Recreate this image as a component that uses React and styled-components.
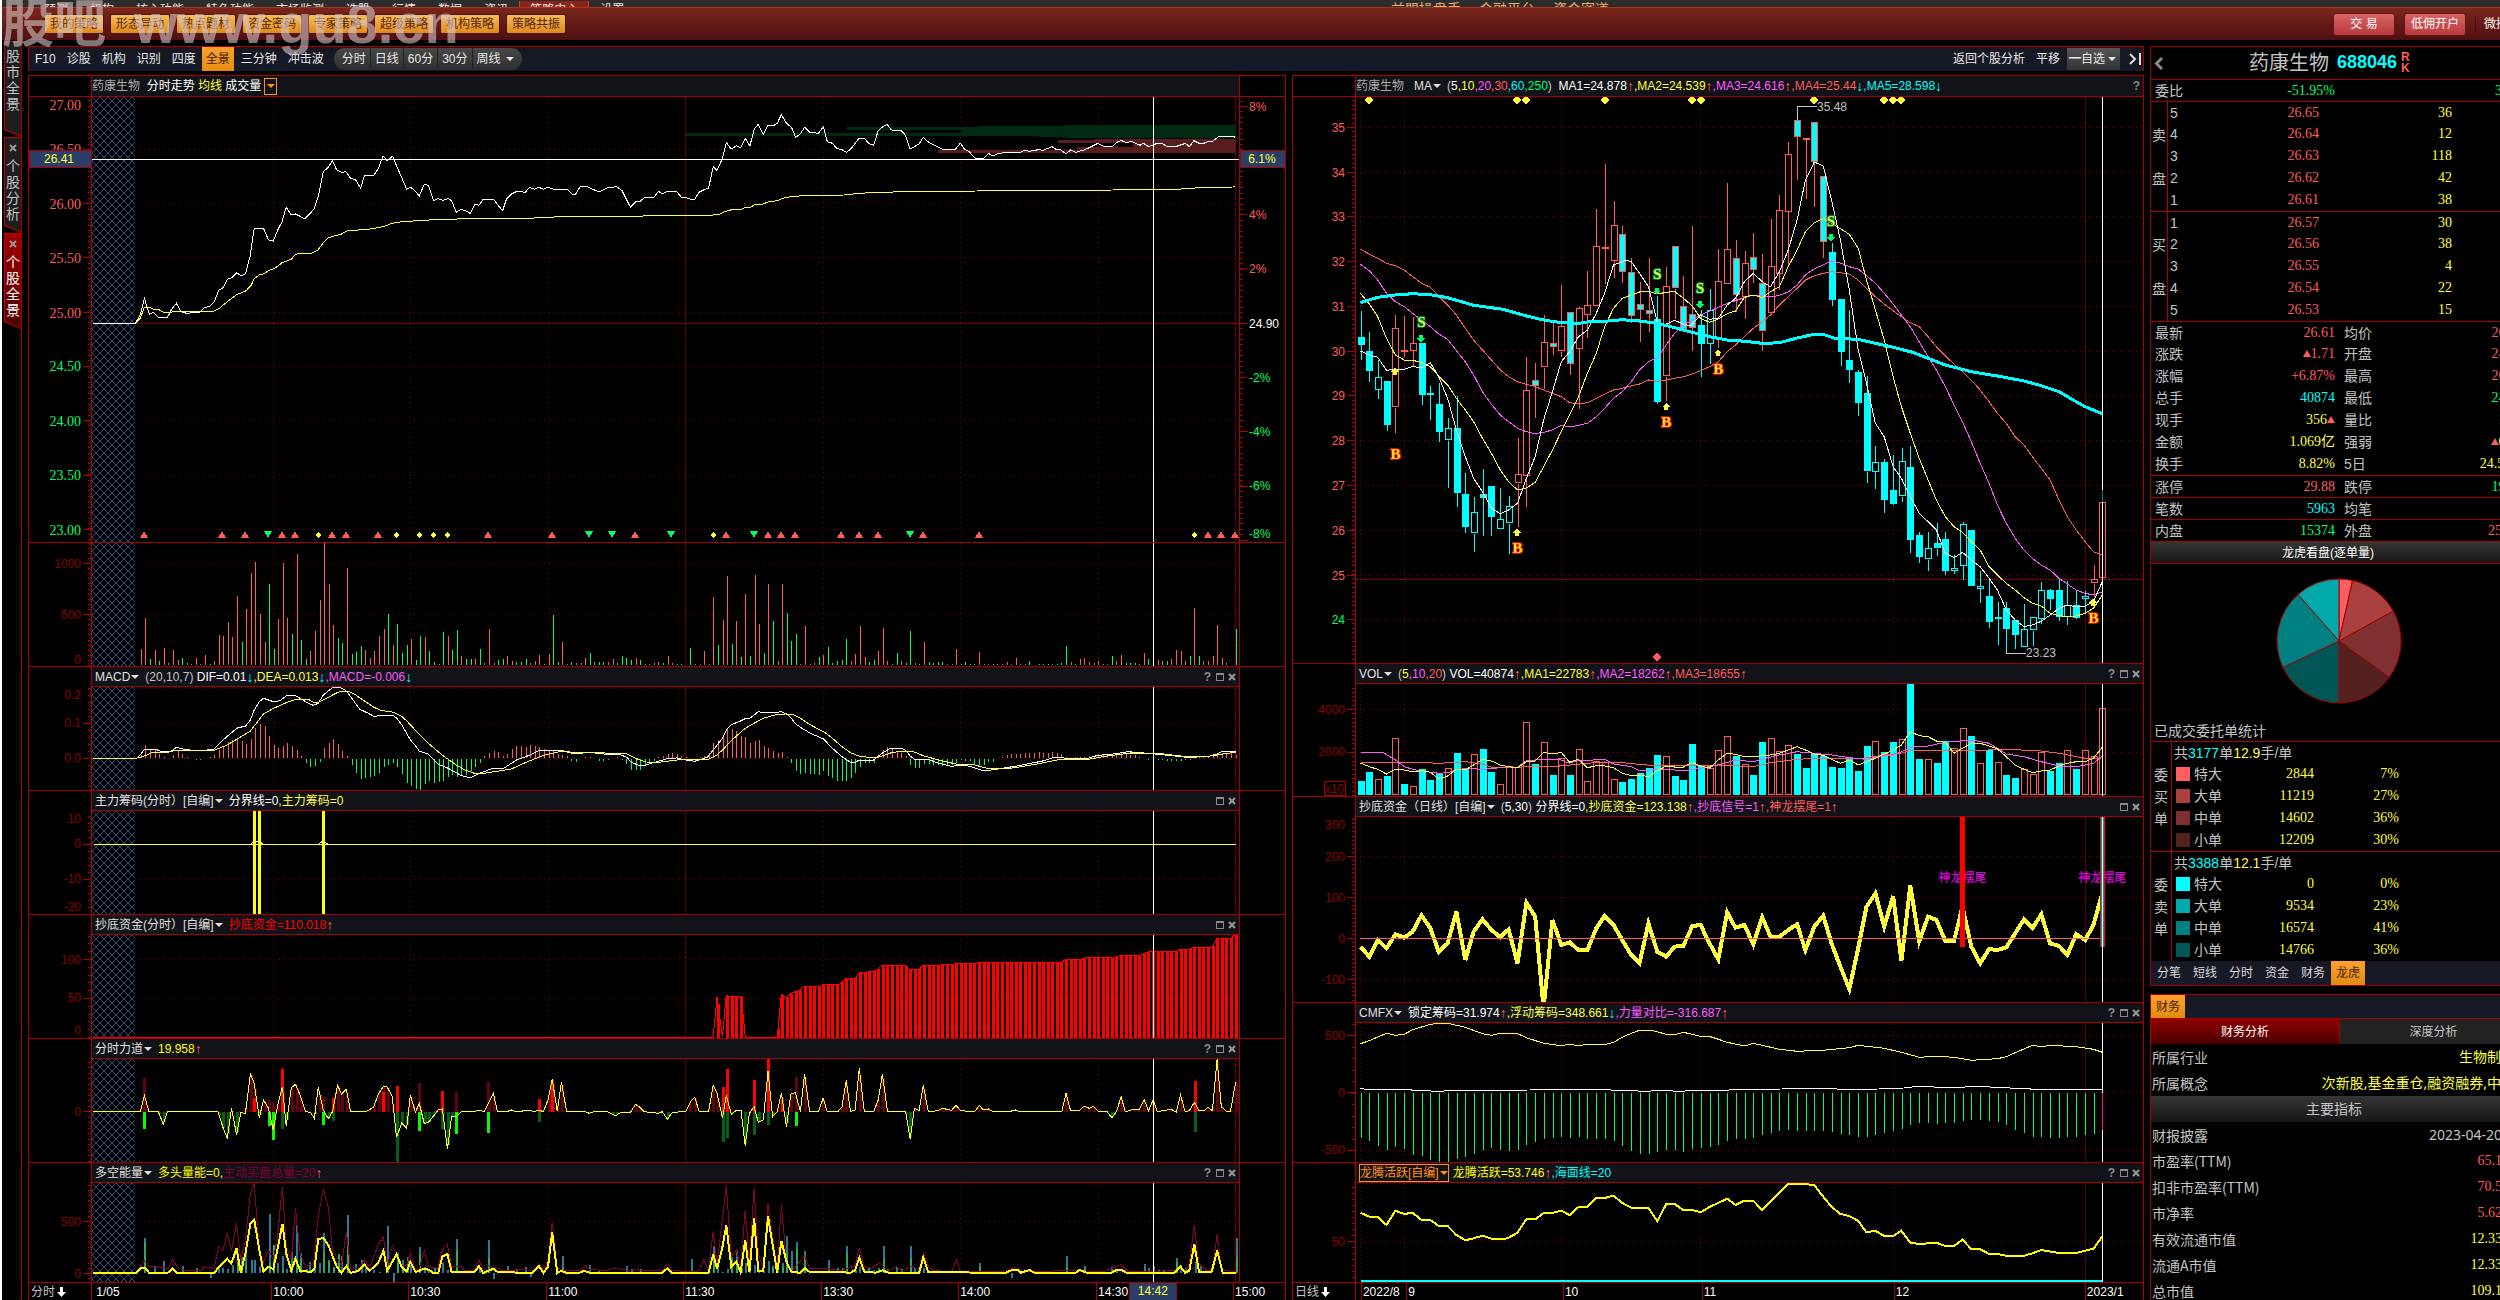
import React from 'react'
import styled, { createGlobalStyle, css } from 'styled-components';

const RED = '#a80000';
const UP = '#ff5c5c';
const DOWN = '#00ff66';
const YEL = '#ffff40';
const CYAN = '#00ffff';
const PINK = '#ff5cff';
const GREY = '#c4c4c4';
const WHITE = '#ffffff';

const GlobalStyle = createGlobalStyle`
    * { box-sizing: border-box; }
    body {
        margin: 0;
        background: #000;
        color: ${GREY};
        font: 12px/16px "Liberation Sans", "Noto Sans CJK SC", sans-serif;
    }
    button {
        font: inherit;
        color: inherit;
        background: none;
        border: 0;
        padding: 0;
        white-space: nowrap;
        cursor: pointer;
    }
    svg { display: block; }
`;

/* ---------- data ---------- */

// session feeds come in two halves, x in feed units from the start of each half
const KX = 660 / 1568;
const session = (a, b, y0) => {
    const out = [];
    for (let i = 0; i < a.length; i += 2) out.push([a[i] * KX, y0 + a[i + 1] / 3]);
    for (let i = 0; i < b.length; i += 2) out.push([640 + b[i] * KX, y0 + b[i + 1] / 3]);
    return out;
};
const KD = 870 / 1568;
const dx = (u) => 1280 + u * KD;
const daily = (a, y0) => {
    const out = [];
    for (let i = 0; i < a.length; i += 2) out.push([dx(a[i]), y0 + a[i + 1] / 3]);
    return out;
};
const minuteX = (m) => Math.round(136.3 + 4.58 * m);
const dayX = (i) => Math.round(1360.5 + 8.728 * i);
const valueAt = (pts, x) => {
    for (let i = 1; i < pts.length; i++) {
        if (x <= pts[i][0]) {
            const [x1, y1] = pts[i - 1];
            const [x2, y2] = pts[i];
            return x2 === x1 ? y2 : y1 + (y2 - y1) * (x - x1) / (x2 - x1);
        }
    }
    return pts[pts.length - 1][1];
};

const price = session(
    [222,970,322,970,333,945,343,895,350,925,355,943,365,937,376,952,398,952,409,925,419,910,430,935,443,940,474,937,486,922,498,920,509,905,520,870,530,863,540,838,551,833,562,818,572,827,583,822,594,770,604,685,626,685,638,720,649,723,660,690,670,665,680,622,691,643,702,642,724,656,735,643,747,625,757,585,768,515,780,502,790,482,800,510,811,517,822,515,833,535,845,540,857,565,866,525,888,525,898,508,910,468,920,482,933,468,943,500,955,535,966,567,975,562,986,572,996,588,1008,553,1018,556,1030,602,1040,596,1052,601,1065,596,1073,602,1084,637,1095,628,1105,632,1117,640,1128,613,1138,616,1148,598,1173,598,1183,615,1194,632,1203,598,1215,582,1228,574,1248,577,1258,562,1270,568,1280,562,1291,568,1302,562,1320,570,1347,568,1360,583,1368,582,1379,559,1393,559,1423,576,1443,564,1465,560,1478,572,1487,595,1498,622,1510,605,1520,606],
    [0,604,12,592,33,592,44,574,53,582,65,574,87,574,98,592,108,592,120,598,130,598,141,576,151,570,163,564,174,500,183,511,196,475,205,428,217,447,229,437,239,443,250,415,261,438,271,388,281,373,293,403,304,376,316,378,326,370,336,344,348,370,360,382,370,412,381,401,391,382,403,397,424,400,436,380,445,425,457,430,467,445,480,449,490,457,500,448,521,414,533,415,543,430,555,436,566,392,575,382,587,373,597,390,620,391,630,405,642,447,663,432,673,412,685,426,707,440,718,448,749,448,761,430,771,447,783,456,795,474,816,475,828,460,838,468,849,461,870,457,903,457,913,451,925,454,946,449,958,451,979,440,990,449,1000,450,1012,462,1023,450,1035,457,1055,450,1067,443,1088,430,1100,438,1121,441,1131,428,1143,421,1155,428,1167,424,1188,436,1196,430,1208,440,1229,430,1240,430,1251,439,1275,439,1296,430,1305,440,1316,422,1328,430,1340,430,1350,424,1360,424,1377,408,1411,408,1414,413], 0);
const average = session(
    [324,967,333,955,343,922,355,922,365,928,376,928,388,937,405,937,418,934,508,934,520,926,540,905,562,884,585,872,597,855,604,836,616,825,626,822,638,812,650,806,660,799,670,788,692,778,702,763,712,760,740,760,755,751,768,728,780,714,790,709,810,703,828,690,850,690,855,687,880,687,910,680,932,670,955,665,1045,658,1130,656,1255,655,1330,650,1515,649],
    [0,649,25,646,168,646,190,642,203,634,215,630,240,628,250,623,262,622,271,615,293,612,305,605,326,602,346,592,385,587,485,585,520,580,570,577,635,575,800,573,1125,570,1275,568,1330,563,1409,561,1414,559], 0);
const volume = [48,141,-18,45,-12,51,6,45,15,-21,-6,3,21,3,30,-3,12,90,87,129,84,207,-69,168,276,309,153,69,-243,-48,138,306,141,-93,333,-75,-18,42,102,195,366,243,120,-81,-66,291,-33,-39,-57,45,21,42,87,108,-153,60,-123,-36,-60,78,-15,-87,84,-42,-9,3,-99,87,-45,-105,27,-18,-18,18,-48,6,108,6,-15,-18,27,12,-9,-9,-18,6,12,30,-3,33,-150,-9,69,3,-9,6,6,21,-36,9,-9,-9,9,18,-6,-27,-21,-15,21,-15,3,3,6,9,-6,27,6,-3,-3,0,-51,3,3,42,3,204,-60,135,267,-63,132,-24,213,-27,270,123,-36,243,-132,12,243,-156,-72,-93,3,117,3,6,-24,30,-54,-6,-12,-15,-78,12,33,117,24,-9,-15,42,111,12,-3,-36,12,-6,-102,6,-3,69,-9,-6,-9,-9,3,3,48,-3,-9,-3,-3,39,3,3,-3,3,3,9,3,21,-3,3,-12,0,-3,-3,-3,3,-3,-6,-57,9,-3,18,21,9,6,12,-3,3,-27,12,30,-6,-6,-6,-3,36,-18,-12,15,12,-12,18,45,42,12,-27,171,-27,12,12,27,120,21,6,0,-108];
const macdBars = [8,39,27,24,12,3,0,9,21,12,3,0,-4,-4,0,3,9,24,36,48,54,57,51,42,57,90,102,96,66,39,30,36,45,36,24,6,-12,-24,-20,-8,30,45,57,42,21,6,-18,-42,-60,-57,-54,-51,-42,-24,-18,-12,-24,-45,-72,-80,-90,-93,-75,-65,-72,-69,-66,-54,-48,-54,-51,-48,-36,-24,-12,6,15,21,18,6,12,27,36,36,33,39,36,33,27,24,21,12,9,6,-6,-9,0,3,3,0,-6,-6,-3,0,3,-3,-15,-33,-33,-33,-21,-15,-6,3,6,12,15,12,6,3,-3,-6,3,6,15,45,54,70,90,87,81,66,63,45,51,54,36,30,21,15,18,3,-12,-36,-45,-42,-45,-45,-48,-36,-51,-57,-66,-66,-66,-57,-42,-24,-12,-12,-12,9,24,33,27,21,15,6,-18,-27,-27,-15,-15,-18,-18,-21,-21,-18,-12,-3,-6,-6,-15,-18,-18,-9,-9,0,3,9,12,12,12,15,15,15,18,15,15,18,15,12,3,0,3,3,3,6,6,12,9,9,9,15,18,12,9,9,3,0,-3,-3,-3,-3,-6,-6,-6,-6,-3,-3,3,6,6,3,6,12,15,15,15,9];
const dif = session(
    [222,715,324,715,333,705,343,688,370,688,385,695,405,695,419,682,437,688,470,693,508,688,518,676,530,660,550,638,565,623,583,619,595,600,604,570,616,545,626,535,638,540,650,545,665,542,682,526,700,526,713,535,730,548,744,556,756,550,768,525,790,503,808,503,822,512,833,530,855,568,875,580,888,589,905,587,933,586,943,595,955,615,966,640,975,660,986,675,996,693,1018,703,1040,732,1065,745,1095,766,1117,774,1140,760,1170,745,1194,747,1227,720,1250,710,1280,692,1333,691,1365,702,1400,697,1440,703,1470,703,1490,712,1498,725,1515,735],
    [0,737,14,735,45,723,65,716,87,714,108,720,130,724,160,712,174,690,196,655,205,630,217,614,239,603,250,596,262,594,281,575,290,577,325,577,336,575,350,583,360,595,370,612,385,625,405,640,436,657,457,685,480,710,500,727,512,727,520,720,555,720,575,700,595,685,622,685,632,692,642,708,655,720,685,718,705,728,740,739,770,735,795,743,816,753,850,747,900,737,960,722,985,712,1000,713,1022,716,1060,716,1088,706,1120,703,1160,695,1190,698,1240,704,1300,712,1350,710,1370,702,1385,694,1415,694], 520);
const dea = session(
    [222,715,324,715,345,707,360,698,400,697,419,690,510,690,540,675,570,652,595,633,626,582,650,565,680,548,700,539,735,540,745,547,756,547,768,540,790,525,808,514,828,514,845,525,866,543,888,562,905,571,935,577,955,590,966,602,990,635,1018,670,1050,705,1084,735,1105,750,1127,760,1150,760,1215,747,1250,727,1291,706,1330,695,1375,697,1420,698,1490,702,1510,715],
    [0,720,15,726,45,727,87,720,108,718,145,719,165,717,183,705,196,690,217,662,250,625,271,610,293,595,320,585,345,582,362,583,381,595,403,613,424,628,440,638,457,655,480,680,500,698,520,708,555,714,575,708,600,697,632,693,655,697,672,707,710,720,750,732,795,735,825,745,880,745,940,733,990,720,1065,718,1110,708,1165,699,1230,700,1290,709,1350,709,1385,702,1415,697], 520);
const bottomFund = session([222,411],
    [0,411,174,411,183,292,196,411,205,286,215,290,241,290,250,411,326,411,336,283,348,292,360,280,369,275,380,272,388,260,430,258,436,253,475,253,490,235,512,235,521,217,558,215,575,196,631,196,640,208,663,208,673,196,710,196,718,193,745,193,751,190,800,190,806,187,1002,187,1012,178,1050,178,1060,172,1115,172,1122,175,1140,167,1188,166,1210,154,1275,154,1285,148,1305,148,1315,142,1360,142,1370,116,1405,114,1415,103], 900);
const force = session(
    [222,635,333,635,343,587,354,635,376,635,388,673,398,635,518,635,529,680,540,716,550,625,562,704,572,638,583,640,595,522,604,550,616,653,626,600,638,625,649,690,659,620,671,560,680,677,692,563,702,553,713,585,726,635,738,637,747,656,756,562,768,630,780,656,790,635,802,556,811,582,823,568,833,635,870,635,887,622,900,580,911,559,920,561,932,590,942,712,954,670,966,685,975,585,987,637,996,610,1008,671,1018,667,1030,648,1041,630,1051,627,1063,748,1073,650,1084,650,1096,635,1127,635,1138,630,1150,635,1160,610,1172,580,1182,635,1203,635,1215,630,1225,635,1258,631,1268,635,1280,630,1291,635,1302,600,1312,537,1324,634,1334,546,1346,635,1390,635,1400,640,1411,635,1442,635,1463,647,1475,637,1498,637,1510,613],
    [0,622,10,635,43,640,53,635,65,658,76,638,98,635,108,635,120,605,130,592,141,635,163,635,174,556,183,580,196,653,205,586,217,643,229,631,240,631,250,737,260,640,271,620,281,667,293,660,304,514,315,650,326,635,336,580,348,681,358,583,369,577,381,635,391,522,403,635,424,635,435,595,445,635,470,635,480,620,490,541,500,635,511,630,521,505,533,635,555,635,566,600,576,522,588,635,631,635,642,716,652,625,663,632,673,556,685,635,707,632,718,625,740,631,751,616,762,632,795,635,806,616,816,630,828,627,837,634,880,634,892,630,903,635,1002,635,1012,580,1023,632,1044,632,1055,618,1067,625,1077,619,1090,635,1110,635,1121,653,1132,635,1143,590,1153,635,1172,628,1186,628,1198,600,1208,632,1219,600,1229,635,1262,628,1274,637,1284,585,1295,635,1305,632,1317,607,1328,632,1340,632,1350,622,1360,632,1371,478,1381,620,1393,634,1403,634,1415,547], 900);
const MAROON = '#620014';
const FOREST = '#045f18';
const forceBars = [
    [343,534,MAROON],[996,549,MAROON],[1084,576,MAROON],[1160,546,MAROON],[768,590,MAROON],[638,600,MAROON],[649,606,MAROON],[1890,531,MAROON],
    [604,594,'red'],[671,507,'red'],[790,595,'red'],[911,575,'red'],[942,558,'red'],[1051,573,'red'],[1280,597,'red'],[1312,540,'red'],
    [1717,561,'red'],[1726,507,'red'],[1792,540,'red'],[1825,475,'red'],[1857,600,'red'],[2838,543,'red'],
    [343,686,'lime'],[638,677,'lime'],[649,719,'lime'],[768,674,'lime'],[996,692,'lime'],[1084,701,'lime'],[1160,698,'lime'],[1890,677,'lime'],
    [671,686,FOREST],[790,662,FOREST],[942,785,FOREST],[1051,686,FOREST],[1280,665,FOREST],[1717,725,FOREST],[1726,713,FOREST],[1792,704,FOREST],[1825,674,FOREST],[2838,695,FOREST],
];
const bullEnergy = session(
    [222,1119,324,1119,336,1104,345,1104,355,1119,398,1119,410,1106,420,1119,509,1119,520,1100,540,1076,550,1090,562,1045,572,1119,583,1060,595,972,604,959,616,1050,626,1115,638,1100,649,1108,659,1050,671,971,680,1060,692,1112,702,1076,713,1112,738,1116,747,1106,756,1018,768,1013,780,1035,800,1100,811,1119,823,1098,833,1119,850,1113,866,1094,878,1112,898,1090,911,1052,920,1112,942,1063,954,1100,966,1116,975,1085,987,1116,1008,1106,1020,1110,1030,1119,1041,1119,1051,1070,1063,1062,1073,1116,1127,1116,1138,1098,1148,1119,1172,1106,1182,1116,1265,1119,1280,1097,1291,1119,1302,1100,1312,997,1324,1119,1334,1112,1346,1119,1375,1119,1388,1112,1400,1118,1515,1118],
    [0,1118,53,1118,65,1105,76,1118,163,1118,174,1062,183,1106,196,1040,205,976,217,1100,229,1085,239,1117,250,1020,260,1117,271,955,281,1112,293,1112,304,949,326,1118,336,1022,348,1085,360,1116,380,1118,391,1104,403,1116,440,1115,500,1118,511,1110,521,1073,533,1115,560,1118,576,1111,590,1118,663,1118,673,1072,685,1117,870,1118,885,1109,898,1109,905,1118,925,1110,937,1118,1035,1118,1044,1109,1060,1118,1120,1118,1132,1110,1145,1110,1155,1118,1270,1118,1284,1100,1295,1118,1305,1112,1317,1033,1328,1116,1358,1116,1371,1052,1384,1118,1415,1118], 900);
const activeBuy = session(
    [324,1115,343,1083,355,1100,388,1103,400,1105,410,1078,420,1100,435,1110,478,1112,486,1100,509,1105,519,1040,529,1052,540,1000,550,1052,562,970,572,1080,583,1020,595,880,604,850,616,1050,626,1085,638,1050,649,1078,659,1010,671,860,680,1040,692,1078,702,925,713,1060,725,1100,745,1090,756,950,768,868,780,920,790,1052,800,1070,811,1097,823,995,833,1105,855,1105,866,1078,878,1105,898,1035,911,1010,920,1100,932,1038,942,1060,954,1095,966,1095,975,1060,987,1110,996,1105,1008,1052,1018,1100,1040,1105,1051,1050,1063,1033,1073,1100,1096,1100,1105,1112,1127,1112,1138,1080,1148,1112,1160,1097,1200,1113,1240,1108,1270,1112,1280,1090,1291,1112,1302,1080,1312,967,1324,1105,1340,1112,1380,1112,1390,1097,1400,1108,1440,1112,1460,1104,1500,1113,1515,1106],
    [0,1113,45,1110,53,1115,65,1090,76,1112,130,1115,141,1112,151,1080,163,1112,174,993,183,1095,205,858,217,1070,229,1050,239,1105,250,930,260,1085,271,865,281,1060,293,1110,304,912,326,1105,336,912,348,1090,360,1115,391,1068,403,1105,440,1105,479,1112,511,1097,521,1043,533,1100,550,1105,570,1088,590,1113,609,1100,625,1115,642,1098,663,1110,673,1060,685,1100,700,1112,740,1115,752,1080,762,1115,860,1115,892,1103,910,1115,1012,1112,1100,1115,1143,1094,1160,1115,1274,1112,1295,1113,1305,1090,1317,976,1328,1090,1345,1112,1360,1112,1371,1003,1381,1110,1415,1115], 900);
// [x, sell top, buy top]
const energyBars = [[343,1015,1025],[365,1097],[388,1083],[432,1098],[465,1105],[498,1133],[518,1108],[528,1105],[540,1107],[550,1095],[562,1060,1085],[572,1070,1100],[583,1060,1095],[597,1080],[604,1080],[616,1100],[638,942,1090],[649,1100,1035],[659,1088],[671,1068,1110],[680,1108],[692,1056],[703,976,1105],[713,1060,1080],[726,1108],[735,1086],[747,1080],[757,1088],[768,1000,1060],[780,1080,1085],[790,1100,1100],[802,1062,1062],[811,1068],[824,945,1040],[844,1093],[857,1080],[866,1100],[887,1110],[900,1116],[920,978],[933,1146],[942,1060,1090],[954,1080,1100],[966,1072],[975,1095],[996,1041,1062],[1008,1100],[1018,1108],[1030,1100],[1051,1088],[1063,1110],[1084,1018,1050],[1138,1100],[1160,1020,1075],[1172,1137],[1204,1098],[1225,1108],[1248,1100],[1258,1130],[1334,1068,1100],[1400,1095],[1421,1110],[1488,1098],[1498,1108],[1520,1108],[1641,1077],[1694,1038,1085],[1704,1090],[1715,1115],[1726,1108],[1737,1070,1100],[1749,1052,1100],[1760,1105],[1770,1090],[1780,1100],[1791,1095],[1801,1110],[1813,1112],[1825,1082],[1835,1097,1105],[1846,1112],[1857,1090,1100],[1868,1009,1062],[1880,1053],[1890,1026,1048],[1911,1053,1070],[1933,1112],[1966,1080],[1988,1105],[2000,1105],[2010,1038,1060],[2031,1110],[2041,1100],[2063,1105],[2075,1110],[2087,1105],[2097,1038,1078],[2108,1108],[2129,1100],[2141,1108],[2162,1038,1075],[2172,1105],[2183,1108],[2193,1105],[2326,1090,1100],[2403,1133],[2532,1068,1100],[2575,1098,1108],[2586,1113],[2640,1100],[2652,1112],[2718,1092,1110],[2728,1105],[2740,1098],[2752,1110],[2763,1110],[2794,1075,1085],[2804,1095],[2815,1105],[2838,1087],[2850,1095],[2936,1015,1070]];
const signals = [
    ['up', [342,528,583,671,701,789,822,899,1160,1312,1509,1724,1824,1856,1889,1998,2041,2086,2192,2326,2870,2901,2933]],
    ['down', [636,1399,1454,1594,1791,2161]],
    ['dot', [756,941,996,1029,1062,1693,2836]],
];

// kind, high, body top, body bottom, low
const candles = [['c',933,1011,1035,1080],['c',995,1053,1113,1146],['h',1080,1132,1171,1197],['c',1143,1143,1275,1293],['r',945,985,1223,1298],['r',948,1051,1054,1070],['r',951,1030,1054,1098],['c',1028,1028,1185,1215],['c',1158,1180,1184,1260],['c',1150,1212,1296,1325],['h',1254,1285,1322,1464],['c',1188,1284,1478,1521],['c',1420,1482,1581,1599],['h',1491,1537,1601,1656],['c',1407,1482,1493,1608],['c',1458,1458,1551,1608],['h',1464,1558,1589,1589],['h',1488,1519,1571,1662],['r',1314,1423,1451,1580],['r',1070,1171,1430,1520],['m',1089,1140,1158,1255],['r',945,1027,1103,1167],['m',970,1029,1041,1065],['r',854,979,1055,1071],['m',936,936,1091,1125],['r',921,925,1048,1227],['r',812,915,946,1014],['r',627,739,919,919],['r',492,741,744,852],['r',603,676,784,834],['m',678,703,817,850],['m',773,817,949,970],['m',846,913,930,1026],['m',773,930,942,996],['c',888,957,1206,1211],['r',801,859,1130,1203],['m',739,739,866,957],['m',828,919,987,987],['m',678,942,984,1053],['c',930,975,1032,1131],['h',867,931,1032,1092],['r',747,844,1018,1045],['r',549,748,853,853],['m',720,775,886,935],['r',753,790,892,957],['m',699,771,811,850],['m',762,850,995,1053],['r',657,799,940,940],['r',585,631,822,870],['r',427,463,637,795],['m',318,361,412,540],['r',414,414,417,597],['m',366,366,486,621],['m',528,528,725,774],['c',729,756,900,918],['c',897,897,1056,1098],['c',930,1080,1110,1149],['c',1110,1116,1209,1248],['c',1128,1180,1415,1449],['h',1338,1386,1415,1467],['c',1377,1386,1499,1539],['c',1365,1470,1511,1515],['h',1344,1384,1490,1506],['c',1338,1401,1619,1659],['c',1596,1605,1670,1689],['h',1596,1645,1679,1713],['c',1569,1630,1646,1668],['c',1596,1617,1713,1725],['h',1664,1704,1712,1722],['h',1566,1573,1699,1740],['c',1590,1590,1757,1757],['h',1713,1758,1767,1809],['c',1734,1788,1866,1884],['c',1806,1851,1856,1935],['c',1806,1824,1886,1960],['c',1859,1859,1904,1947],['h',1812,1887,1940,1940],['h',1852,1852,1892,1938],['h',1746,1771,1858,1872],['c',1767,1770,1796,1830],['c',1734,1770,1850,1863],['h',1743,1816,1852,1875],['c',1770,1815,1854,1857],['h',1773,1788,1798,1840],['r',1695,1738,1751,1790],['r',1506,1506,1733,1733]];
const maLines = [
    [UP, 1, daily([145,748,161,762,176,775,192,790,208,797,224,810,239,830,255,850,271,862,286,888,302,915,318,945,334,985,349,1020,365,1050,381,1080,397,1110,412,1130,428,1145,444,1153,460,1160,475,1170,491,1180,507,1190,522,1208,538,1211,554,1208,570,1195,585,1183,601,1170,617,1165,633,1158,648,1152,664,1140,680,1144,696,1140,711,1135,727,1130,743,1122,758,1112,774,1100,790,1085,806,1055,821,1035,837,1010,853,985,869,965,884,945,900,915,916,890,932,865,947,840,963,827,979,820,994,815,1010,818,1026,822,1042,840,1057,865,1073,890,1089,912,1105,932,1120,950,1136,968,1152,980,1168,1010,1183,1040,1199,1068,1215,1092,1230,1115,1246,1140,1262,1170,1278,1205,1293,1240,1309,1270,1325,1310,1341,1335,1356,1370,1372,1405,1388,1440,1404,1500,1419,1550,1435,1590,1451,1625,1466,1655,1482,1665], 0)],
    [PINK, 1, daily([145,793,161,812,176,840,192,880,208,905,224,920,239,940,255,960,271,980,286,1002,302,1018,318,1052,334,1085,349,1125,365,1175,381,1213,397,1245,412,1265,428,1285,444,1295,460,1301,475,1297,491,1290,507,1276,522,1281,538,1276,554,1270,570,1250,585,1225,601,1195,617,1175,633,1145,648,1110,664,1085,680,1073,696,1035,711,1000,727,975,743,960,758,945,774,934,790,922,806,910,821,902,837,893,853,885,869,888,884,891,900,886,916,876,932,855,947,825,963,806,979,795,994,783,1010,789,1026,800,1042,807,1057,827,1073,850,1089,880,1105,912,1120,945,1136,980,1152,1025,1168,1070,1183,1110,1199,1160,1215,1215,1230,1265,1246,1325,1262,1390,1278,1450,1293,1515,1309,1570,1325,1615,1341,1650,1356,1675,1372,1695,1388,1710,1404,1735,1419,1752,1435,1770,1451,1780,1466,1785,1482,1776], 0)],
    [YEL, 1, daily([145,880,161,912,176,950,192,1015,208,1065,224,1080,250,1084,271,1100,286,1128,302,1155,318,1195,334,1230,349,1265,365,1315,381,1360,397,1410,412,1445,428,1470,444,1464,460,1447,475,1400,491,1350,507,1295,522,1245,538,1190,554,1120,570,1060,585,980,601,925,617,895,633,885,648,876,664,874,680,882,696,877,711,874,727,895,743,918,758,955,774,967,790,957,806,941,821,933,837,892,853,885,869,893,884,875,900,860,916,800,932,750,947,695,963,668,979,655,994,670,1010,686,1026,703,1042,745,1057,840,1073,930,1089,1020,1105,1130,1120,1220,1136,1300,1152,1375,1168,1440,1183,1500,1199,1550,1215,1580,1230,1597,1246,1625,1262,1650,1278,1700,1293,1725,1309,1750,1325,1770,1341,1793,1356,1810,1372,1818,1388,1840,1404,1847,1419,1850,1435,1848,1451,1840,1466,1825,1482,1785], 0)],
    [WHITE, 1, daily([145,1053,161,1065,176,1072,192,1111,208,1108,224,1108,239,1099,255,1104,271,1088,286,1130,302,1195,318,1290,334,1370,349,1435,365,1475,381,1525,397,1541,412,1530,428,1510,444,1435,460,1370,475,1260,491,1175,507,1085,522,1055,538,1010,554,990,570,940,585,880,601,795,617,785,625,780,633,785,648,820,664,860,680,965,690,975,702,968,711,961,727,972,740,978,758,945,774,958,790,955,806,915,821,895,837,845,853,820,869,845,884,860,900,815,916,750,932,660,947,540,963,486,979,498,994,600,1010,720,1026,870,1042,1050,1057,1150,1073,1270,1089,1310,1105,1400,1120,1435,1136,1490,1152,1540,1168,1565,1183,1590,1199,1660,1215,1673,1230,1657,1246,1680,1262,1700,1278,1735,1293,1770,1309,1830,1325,1860,1341,1880,1356,1875,1372,1864,1388,1845,1404,1825,1419,1816,1435,1820,1451,1818,1466,1805,1482,1745], 0)],
    [CYAN, 3, daily([145,908,176,892,208,885,239,881,271,884,302,893,349,916,402,928,444,948,475,960,507,968,540,970,554,966,585,964,617,959,648,963,680,970,711,983,743,997,774,1010,806,1020,837,1024,869,1030,884,1030,905,1026,932,1014,963,1003,979,1003,1000,1015,1042,1018,1073,1030,1105,1042,1140,1057,1168,1075,1199,1095,1246,1115,1293,1128,1341,1143,1372,1157,1404,1175,1435,1205,1451,1220,1482,1241], 0)],
];
// negative = falling day
const dayVolume = [-42,-69,47,-57,170,-33,26,-78,-45,-63,80,-126,-78,122,-138,-69,32,86,85,218,-93,158,-60,110,-60,137,41,101,98,47,-39,-48,-66,-81,-120,116,-57,-45,-153,-90,80,134,176,-118,92,-60,-159,170,131,149,-123,-81,-125,-117,-84,-81,-108,-72,-147,161,-129,-159,167,-336,-108,107,-96,-162,140,200,-177,95,-135,98,-60,-51,77,62,128,-72,-96,134,-78,134,118,260];
const volLines = [
    [UP, 1, daily([145,1087,250,1087,286,1090,334,1085,365,1092,381,1102,491,1100,554,1090,585,1086,617,1088,680,1098,790,1095,853,1100,884,1088,932,1078,979,1074,1042,1077,1089,1065,1120,1060,1136,1050,1230,1053,1309,1048,1372,1053,1404,1060,1451,1075,1482,1074], 400)],
    [PINK, 1, daily([145,1057,185,1057,208,1080,224,1100,239,1108,255,1113,286,1120,302,1118,318,1110,334,1105,365,1108,397,1103,412,1100,428,1102,444,1082,475,1078,507,1080,522,1090,538,1080,554,1083,570,1078,585,1078,601,1092,633,1100,648,1112,696,1107,727,1113,758,1105,790,1095,821,1080,853,1085,869,1077,900,1065,932,1055,963,1060,994,1065,1026,1073,1057,1078,1089,1068,1105,1066,1120,1055,1136,1042,1168,1038,1199,1027,1246,1020,1278,1030,1293,1045,1309,1062,1341,1070,1372,1085,1404,1098,1435,1100,1466,1090,1482,1068], 400)],
    [YEL, 1, daily([145,1089,161,1100,176,1108,192,1122,208,1108,224,1110,239,1115,255,1112,271,1117,286,1137,302,1128,318,1108,334,1110,349,1095,365,1078,381,1083,397,1095,412,1100,428,1103,444,1085,460,1083,475,1057,491,1062,507,1057,522,1087,538,1078,554,1103,570,1097,585,1098,601,1103,617,1120,633,1127,648,1125,664,1130,680,1112,696,1098,711,1101,727,1101,743,1087,758,1098,774,1104,790,1080,806,1060,821,1063,837,1070,853,1070,869,1067,884,1065,900,1060,916,1050,932,1040,947,1050,963,1062,979,1066,994,1078,1010,1090,1026,1080,1042,1095,1057,1085,1073,1075,1089,1062,1105,1050,1120,1035,1136,995,1152,1007,1168,1010,1183,1023,1199,1027,1215,1060,1230,1045,1246,1030,1262,1030,1278,1038,1293,1047,1309,1070,1325,1095,1341,1108,1356,1118,1372,1113,1388,1110,1404,1098,1419,1090,1435,1085,1451,1085,1466,1075,1482,1042], 400)],
];
const dayFund = daily([145,440,161,470,176,420,192,445,208,403,224,413,239,395,255,346,271,385,286,455,302,430,318,335,334,480,349,395,365,358,381,390,397,412,412,388,428,490,444,308,460,350,475,625,491,360,507,435,522,427,538,450,554,450,570,385,585,348,601,375,617,420,633,465,648,490,664,370,680,455,696,470,711,440,727,437,743,378,758,375,774,430,790,478,806,337,821,383,837,375,853,433,869,352,884,410,900,410,916,390,932,373,947,450,963,380,979,347,994,430,1010,500,1026,567,1042,445,1057,320,1073,280,1089,380,1105,288,1120,483,1136,257,1152,423,1168,350,1183,360,1199,423,1215,422,1230,320,1246,440,1262,490,1278,447,1293,450,1309,442,1325,400,1341,358,1356,385,1372,343,1388,430,1404,438,1419,465,1435,403,1451,420,1466,375,1482,280], 800);
const floatChips = daily([145,731,161,722,192,700,208,706,224,703,239,689,271,673,286,670,302,670,334,682,365,701,381,706,397,700,428,701,444,713,475,730,507,737,522,733,538,737,554,733,588,733,601,727,617,712,633,700,648,691,670,691,696,703,711,704,727,697,743,703,758,709,774,709,806,727,837,738,853,730,869,736,900,748,932,754,985,750,1026,743,1042,736,1089,745,1120,757,1152,772,1183,769,1215,772,1246,781,1293,776,1309,770,1325,758,1356,736,1372,740,1388,736,1435,740,1466,748,1482,757], 800);
const lockedChips = daily([145,865,155,868,230,868,240,871,286,874,320,871,450,870,455,868,590,868,600,871,640,872,650,874,690,872,725,874,740,871,805,871,820,868,905,867,915,865,1000,865,1005,868,1080,867,1090,865,1125,864,1150,859,1175,859,1180,862,1230,862,1245,859,1270,860,1290,862,1315,864,1350,866,1355,868,1482,868], 800);
const chipGap = [1014,1022,1038,1050,1041,1047,1065,1068,1080,1086,1086,1077,1071,1062,1050,1044,1050,1053,1050,1035,1026,1017,1014,1011,1014,1011,1017,1017,1017,1023,1038,1053,1062,1062,1056,1050,1050,1056,1047,1044,1041,1035,1023,1017,1017,1014,1005,999,993,990,993,993,993,993,997,1002,1005,1011,1011,1005,999,993,987,975,969,969,972,969,969,963,960,960,963,966,975,990,999,1011,1011,1014,1014,1011,1011,1005,1002,990];
const activity = daily([145,1238,161,1250,176,1251,192,1275,208,1232,224,1242,239,1238,255,1260,271,1260,286,1278,302,1278,318,1305,334,1321,349,1315,365,1307,381,1316,402,1318,412,1313,428,1298,444,1258,460,1258,475,1239,491,1239,507,1232,522,1245,538,1221,554,1221,570,1194,585,1194,601,1187,617,1209,633,1223,664,1223,680,1264,696,1212,711,1212,727,1230,743,1230,758,1237,774,1221,806,1196,821,1215,837,1202,853,1202,869,1230,884,1205,900,1177,916,1152,947,1152,963,1156,979,1190,994,1220,1010,1242,1026,1248,1042,1263,1057,1297,1073,1292,1089,1308,1105,1308,1120,1292,1136,1328,1152,1332,1183,1328,1199,1338,1215,1338,1230,1319,1246,1347,1262,1348,1278,1362,1293,1362,1309,1367,1341,1367,1356,1360,1372,1350,1404,1359,1435,1359,1466,1346,1482,1310], 800);

/* ---------- page frame ---------- */

const Page = styled.div`
    position: relative;
    display: flex;
    flex-direction: column;
    height: 100vh;
    overflow: hidden;
    border-left: 2px solid #fff;
    background: #000;
`;

const MenuBar = styled.nav`
    display: grid;
    grid-template-columns: 1389fr 1109fr;
    align-items: end;
    height: 7px;
    flex: none;
    overflow: hidden;
    background: #2c2c2c;
`;

const MenuList = styled.div`
    display: flex;
    align-items: flex-end;
`;

const Logo = styled.i`
    width: 18px;
    height: 6px;
    margin: 0 7px 1px 6px;
    border-radius: 0 0 9px 9px;
    background: linear-gradient(90deg, #1c3c88, #2a78d8);
`;

const MenuItem = styled.button`
    padding: 0 10px 3px;
    line-height: 18px;
    color: #e6e6e6;
    border: solid transparent;
    border-width: 0 1px;
    ${p => p.$on && css`
        background: #8a2418;
        border-color: #d04030;
    `}
`;

const AppTitle = styled.div`
    display: flex;
    gap: 18px;
    padding-bottom: 4px;
    font-size: 14px;
    line-height: 18px;
    color: #e8b070;
`;

const StrategyBar = styled.header`
    display: flex;
    align-items: center;
    gap: 6px;
    height: 33px;
    flex: none;
    padding-left: 42px;
    border-top: 1px solid #a83420;
    background: linear-gradient(#7a261a, #4e0f12);
`;

const StrategyButton = styled.button`
    height: 20px;
    width: 60px;
    border: 1px solid #4a1408;
    border-radius: 2px;
    background: linear-gradient(#f8bc58, #e08a1c);
    color: #54230a;
`;

const TradeArea = styled.div`
    display: flex;
    align-items: center;
    gap: 9px;
    margin-left: auto;
    width: 167px;
    overflow: hidden;
    white-space: nowrap;
    color: #fff;
`;

const TradeButton = styled.button`
    flex: none;
    width: 62px;
    height: 23px;
    border: 1px solid #6a1414;
    border-radius: 3px;
    background: linear-gradient(#d86464, #b83a3c);
`;

const MoreLink = styled.a`
    padding-left: 8px;
    border-left: 1px solid #4a1010;
    color: #fff;
    text-decoration: none;
`;

const Watermark = styled.div`
    position: absolute;
    left: 0;
    top: 0;
    display: flex;
    gap: 28px;
    pointer-events: none;
    color: rgba(214, 196, 196, .6);
    font-weight: bold;
    font-size: 56px;
    line-height: 47px;
    span { font-size: 52px; line-height: 48px; }
`;

const Body = styled.div`
    display: flex;
    flex: 1;
    min-height: 0;
`;

const SideRail = styled.aside`
    flex: none;
    width: 20px;
    padding: 1px 0 0 2px;
    margin-right: 6px;
    border-right: 1px solid ${RED};
`;

const RailTab = styled.button`
    position: relative;
    display: flex;
    flex-direction: column;
    align-items: center;
    gap: 6px;
    width: 17px;
    height: 96px;
    padding: 7px 0 0 1px;
    background: #c00000;
    clip-path: polygon(0 0, 100% 0, 100% 100%, 0 calc(100% - 7px));
    font-size: 14px;
    line-height: 16px;
    white-space: normal;
    color: ${p => p.$on ? '#fff' : GREY};
    &::before {
        content: '';
        position: absolute;
        inset: 1px 0 1px 1px;
        clip-path: inherit;
        background: ${p => p.$on ? 'linear-gradient(#a00000, #4a0000)' : '#1e1e1e'};
    }
    svg, span { position: relative; }
    span { width: 14px; }
`;

const Charts = styled.main`
    flex: 1;
    min-width: 0;
    padding-top: 6px;
`;

const Toolbar = styled.div`
    display: flex;
    align-items: stretch;
    height: 25px;
    margin-bottom: 4px;
    padding-left: 1px;
    border: solid ${RED};
    border-width: 1px 1px 0 1px;
    background: linear-gradient(#171720, #141a2c);
    color: #e8e8e8;
`;

const Tool = styled.button`
    padding: 0 6px 0 5px;
    ${p => p.$on && css`
        padding: 0 4px;
        margin-right: 2px;
        background: linear-gradient(#ffa030, #e88c10);
        color: #301800;
    `}
`;

const Periods = styled.div`
    display: flex;
    align-items: stretch;
    margin: 1px 0 1px 4px;
    padding: 0 4px;
    border-radius: 12px;
    background: linear-gradient(#484848, #2e2e2e);
`;

const Period = styled.button`
    display: flex;
    align-items: center;
    gap: 5px;
    padding: 0 4px;
    & + & { border-left: 1px solid #222; }
`;

const ToolsRight = styled.div`
    display: flex;
    align-items: stretch;
    margin-left: auto;
`;

const WatchList = styled.button`
    display: flex;
    align-items: center;
    gap: 3px;
    margin: 1px 9px 1px 1px;
    padding: 0 4px 0 2px;
    background: linear-gradient(#555, #333);
`;

const Caret = styled.i`
    width: 0;
    height: 0;
    border: 4px solid transparent;
    border-top-color: currentColor;
    border-bottom: 0;
`;

const Panels = styled.div`
    display: grid;
    grid-template-columns: minmax(0, 1258fr) minmax(0, 852fr);
    gap: 6px;
`;

const Panel = styled.section`
    border: solid ${RED};
    border-width: 0 1px;
`;

/* ---------- chart panes ---------- */

const PaneGrid = styled.div`
    display: grid;
    grid-template-columns: 63px minmax(0, 1fr) ${p => p.$right ? '46px' : ''};
    border-top: 1px solid ${RED};
`;

const AxisCell = styled.div`
    grid-column: ${p => p.$right ? 3 : 1};
    grid-row: 1 / span 2;
    border: 0 solid ${RED};
    border-width: ${p => p.$right ? '0 0 0 1px' : '0 1px 0 0'};
`;

const PaneHead = styled.div`
    grid-column: 2;
    display: flex;
    align-items: center;
    height: ${p => p.$main ? 20 : 19}px;
    padding: 0 3px 0 ${p => p.$main ? 0 : 3}px;
    background: #121318;
    white-space: pre;
    color: #e0e0e0;
`;

const HeadName = styled.button`
    display: inline-flex;
    align-items: center;
    gap: 1px;
    margin-right: 6px;
    ${p => p.$boxed && css`
        height: 18px;
        margin-right: 4px;
        border: 1px solid #ff9020;
        color: #ff9020;
    `}
`;

const MenuDrop = styled.button`
    display: grid;
    place-items: center;
    width: 13px;
    height: 17px;
    border: 1px solid #ff9020;
    color: #ff9020;
    margin-left: 3px;
`;

const Tint = styled.span`
    color: ${p => p.$c};
`;

const Arrow = styled(Tint)`
    font-size: 14px;
    font-weight: bold;
`;

const HeadTools = styled.span`
    display: flex;
    align-items: center;
    gap: 4px;
    margin-left: auto;
    font-weight: bold;
    color: #8a8a8a;
`;

const PlotCell = styled.div`
    grid-column: 2;
    ${p => !p.$plain && css`border-top: 1px solid ${RED};`}
`;

const Plot = styled.svg`
    width: 100%;
    height: ${p => p.$h}px;
    shape-rendering: crispEdges;
    font: 12px "Liberation Sans", "Noto Sans CJK SC", sans-serif;
`;

const AxisText = styled.text`
    font: ${p => p.$serif ? '14px "Liberation Serif", serif' : '12px "Liberation Sans", "Noto Sans CJK SC", sans-serif'};
    fill: ${p => p.$c};
    text-anchor: ${p => p.$anchor || 'end'};
    dominant-baseline: central;
`;

const MarkText = styled.text`
    font: bold 15px "Liberation Serif", serif;
    text-anchor: middle;
    dominant-baseline: central;
    paint-order: stroke;
    stroke-width: 2px;
    fill: ${p => p.$buy ? '#ffe020' : '#d8ff40'};
    stroke: ${p => p.$buy ? '#e00000' : '#007a40'};
`;

function Line({ pts, c, w = 1 }) {
    return <polyline points={pts.map(([x, y]) => `${x.toFixed(1)},${y.toFixed(1)}`).join(' ')} fill="none" stroke={c} strokeWidth={w} />;
}

function Ticks({ x, dir, top, bottom, from, step, major }) {
    const minor = [];
    for (let y = from; y < bottom; y += step) minor.push(y);
    for (let y = from - step; y > top; y -= step) minor.push(y);
    return (
        <g stroke={RED}>
            {minor.map(y => <line key={y} x1={x} x2={x + dir * 3} y1={y} y2={y} />)}
            {major.map(y => <line key={'m' + y} x1={x} x2={x + dir * 8} y1={y} y2={y} />)}
        </g>
    );
}

function Axis({ x, y, h, labels, major, from, step, top, tag, right, serif, children }) {
    const tx = right ? x + 9 : x + 52;
    return (
        <Plot $h={h} viewBox={`${x} ${y} ${right ? 45 : 62} ${h}`}>
            {from && <Ticks x={right ? x : x + 62} dir={right ? 1 : -1} top={top} bottom={y + h} from={from} step={step} major={major} />}
            {labels.map(([t, ly, c]) => (
                <AxisText key={t} x={tx} y={ly} $c={c || '#8c0000'} $serif={serif} $anchor={right ? 'start' : 'end'}>{t}</AxisText>
            ))}
            {tag && (
                <g>
                    <rect x={x} y="150" width={right ? 45 : 62} height="17" fill="#2a3f68" stroke={RED} />
                    <AxisText x={x + (right ? 22 : 30)} y="159" $c={YEL} $anchor="middle">{tag}</AxisText>
                </g>
            )}
            {children}
        </Plot>
    );
}

const SQ = (
    <svg width="9" height="9" viewBox="0 0 9 9" shapeRendering="crispEdges"><path d="M1 1h7v7H1zM1 2h7" fill="none" stroke="#8a8a8a" /></svg>
);
const CloseIcon = ({ size = 8 }) => (
    <svg width={size} height={size} viewBox="0 0 8 8"><path d="M1 1l6 6M7 1L1 7" stroke="#999" strokeWidth="2" /></svg>
);

function Values({ list }) {
    return list.map(([t, c], i) => {
        const Part = t === '↑' || t === '↓' ? Arrow : Tint;
        return <Part key={i} $c={c}>{t}</Part>;
    });
}

const up = ['↑', UP];
const dn = ['↓', CYAN];

function Head({ name, boxed, values, tools = 'all' }) {
    return (
        <PaneHead>
            <HeadName $boxed={boxed}>{name}<Caret /></HeadName>
            <Values list={values} />
            <HeadTools>
                {tools === 'all' && <button aria-label="帮助">?</button>}
                <button aria-label="最大化">{SQ}</button>
                <button aria-label="关闭"><CloseIcon /></button>
            </HeadTools>
        </PaneHead>
    );
}

const V_DOTS = [273.5, 410.5, 548.5, 823.5, 960.5, 1098.5];
const V_DASH = [685.5, 1235.5];

function MinutePlot({ y, h, rows = [], children }) {
    const id = 'hatch' + y;
    return (
        <Plot $h={h} viewBox={`92 ${y} 1147 ${h}`} preserveAspectRatio="none">
            <defs>
                <pattern id={id} x="92" y={y} width="8" height="8" patternUnits="userSpaceOnUse">
                    <path d="M0 0L8 8M8 0L0 8" stroke="#2f4c80" strokeWidth="1" />
                </pattern>
            </defs>
            <rect x="92" y={y} width="43" height={h} fill={`url(#${id})`} />
            <g stroke="#780000" strokeDasharray="1 4">
                {rows.map(r => <line key={r} x1="139" x2="1236" y1={r} y2={r} />)}
                {V_DOTS.map(x => <line key={x} x1={x} x2={x} y1={y} y2={y + h} />)}
            </g>
            <g stroke="#700000" strokeDasharray="4 1">
                {V_DASH.map(x => <line key={x} x1={x} x2={x} y1={y} y2={y + h} />)}
            </g>
            {children}
            <line x1="1153.5" x2="1153.5" y1={y} y2={y + h} stroke="#fff" />
        </Plot>
    );
}

function MinutePane({ y, h, head, labels, rows, major, from, step, children }) {
    return (
        <PaneGrid $right>
            <AxisCell>
                <Axis x={29} y={y - 20} h={h + 20} top={y} labels={labels} major={major || rows} from={from} step={step} />
            </AxisCell>
            {head}
            <PlotCell><MinutePlot y={y} h={h} rows={rows}>{children}</MinutePlot></PlotCell>
            <AxisCell $right />
        </PaneGrid>
    );
}

function DayPlot({ y, h, rows = [], children }) {
    return (
        <Plot $h={h} viewBox={`1356 ${y} 787 ${h}`} preserveAspectRatio="none">
            <g stroke="#780000" strokeDasharray="1 3">
                {rows.map(r => <line key={r} x1="1360" x2="2143" y1={r} y2={r} />)}
                {[145, 224, 507, 758, 1106].map(u => <line key={u} x1={dx(u)} x2={dx(u)} y1={y} y2={y + h} />)}
            </g>
            <line x1="2085.5" x2="2085.5" y1={y} y2={y + h} stroke="#600000" />
            {children}
        </Plot>
    );
}
const DayCursor = ({ y, h }) => <line x1="2102.5" x2="2102.5" y1={y} y2={y + h} stroke="#fff" />;

function DayPane({ y, h, head, labels, rows, from, step, extra, children }) {
    return (
        <PaneGrid>
            <AxisCell>
                <Axis x={1293} y={y - 20} h={h + 20} top={y} labels={labels} major={rows} from={from} step={step}>{extra}</Axis>
            </AxisCell>
            {head}
            <PlotCell><DayPlot y={y} h={h} rows={rows}>{children}</DayPlot></PlotCell>
        </PaneGrid>
    );
}

const TimeRow = styled.div`
    display: grid;
    grid-template-columns: 63px minmax(0, 1fr) ${p => p.$right ? '46px' : ''};
    height: 18px;
    border-top: 1px solid ${RED};
`;

const Unit = styled.button`
    display: flex;
    align-items: center;
    gap: 2px;
    padding-left: 2px;
    border-right: 1px solid ${RED};
`;

const Stamps = styled.div`
    display: flex;
    position: relative;
    color: #fff;
    line-height: 18px;
`;

const Stamp = styled.span`
    flex: ${p => p.$w} 0 0;
    min-width: 0;
    padding-left: 1px;
    white-space: nowrap;
    border-left: ${p => p.$first ? '0' : `1px solid ${RED}`};
`;

const CursorTag = styled.span`
    position: absolute;
    left: 90.4%;
    width: 48px;
    height: 17px;
    line-height: 17px;
    text-align: center;
    border: 1px solid ${RED};
    border-width: 0 1px;
    background: #2a3f68;
    color: ${YEL};
`;

const DownArrow = () => (
    <svg width="9" height="10" viewBox="0 0 9 10"><path d="M3 0h3v5h3L4.5 10 0 5h3z" fill="#fff" /></svg>
);

function MinutePanel() {
    const redBars = [];
    for (let m = 127; m <= 240; m++) {
        const x = minuteX(m);
        const top = valueAt(bottomFund, x);
        if (top < 1030) redBars.push([x, top]);
    }
    const forceAuto = [];
    for (let m = 1; m <= 240; m++) {
        const x = minuteX(m);
        const v = valueAt(force, x);
        if (Math.abs(v - 1111.5) > 1.5) forceAuto.push([x, v]);
    }
    const priceGrid = [149.5, 203.5, 257.5, 312.5, 366.5, 420.5, 475.5, 529.5];
    return (
        <Panel>
            <PaneGrid $right>
                <AxisCell>
                    <Axis x={29} y={76} h={466} top={97} from={149.5} step={5.42} major={priceGrid} serif
                        labels={[['27.00', 105, UP], ['26.50', 149, UP], ['26.00', 204, UP], ['25.50', 258, UP], ['25.00', 313, UP], ['24.50', 366, DOWN], ['24.00', 421, DOWN], ['23.50', 475, DOWN], ['23.00', 530, DOWN]]}
                        tag="26.41">
                        <line x1="29" x2="91" y1="96.5" y2="96.5" stroke={RED} />
                    </Axis>
                </AxisCell>
                <PaneHead $main>
                    <Tint $c="#a8a8a8">药康生物  </Tint>
                    <Values list={[['分时走势', WHITE], [' 均线', YEL], [' 成交量', WHITE]]} />
                    <MenuDrop aria-label="更多"><Caret /></MenuDrop>
                </PaneHead>
                <PlotCell>
                    <MinutePlot y={97} h={445} rows={priceGrid}>
                        <g fill="#002a12">
                            <rect x="686" y="133" width="276" height="3" />
                            <rect x="847" y="127" width="115" height="3" />
                            <rect x="962" y="127" width="17" height="9" />
                            <rect x="978" y="126" width="87" height="10" />
                            <rect x="1039" y="134" width="27" height="3" />
                            <rect x="1065" y="125" width="171" height="13" />
                        </g>
                        <g fill="#581e1e">
                            <rect x="938" y="150" width="298" height="3" />
                            <rect x="1058" y="140" width="76" height="3" />
                            <rect x="1094" y="139" width="40" height="4" />
                            <rect x="1077" y="147" width="57" height="6" />
                            <rect x="1133" y="139" width="103" height="14" />
                        </g>
                        <line x1="136" x2="1239" y1="323.5" y2="323.5" stroke={RED} strokeDasharray="3 1" />
                        <Line pts={average} c={YEL} />
                        <Line pts={price} c={WHITE} />
                        <line x1="92" x2="1239" y1="159.5" y2="159.5" stroke="#fff" />
                        {signals.map(([kind, xs]) => xs.map(u => {
                            const x = Math.round(u * KX);
                            if (kind === 'up') return <path key={u} d={`M${x} 531l4 7h-8z`} fill={UP} />;
                            if (kind === 'down') return <path key={u} d={`M${x} 538l-4-7h8z`} fill={DOWN} />;
                            return <path key={u} d={`M${x + .5} 532l3 3-3 3-3-3z`} fill={YEL} />;
                        }))}
                    </MinutePlot>
                </PlotCell>
                <AxisCell $right>
                    <Axis right x={1240} y={76} h={466} top={97} from={106.5} step={5.42} major={[106.5, 214.5, 268.5, 323.5, 377.5, 431.5, 486.5, 540.5]}
                        labels={[['8%', 107, UP], ['4%', 215, UP], ['2%', 269, UP], ['24.90', 324, WHITE], ['-2%', 378, DOWN], ['-4%', 432, DOWN], ['-6%', 486, DOWN], ['-8%', 534, DOWN]]}
                        tag="6.1%">
                        <line x1="1240" x2="1285" y1="96.5" y2="96.5" stroke={RED} />
                    </Axis>
                </AxisCell>
            </PaneGrid>
            <PaneGrid $right>
                <AxisCell>
                    <Axis x={29} y={543} h={123} top={543} from={563.5} step={5.1} major={[563.5, 614.5]}
                        labels={[['1000', 564], ['500', 615], ['0', 660]]} />
                </AxisCell>
                <PlotCell $plain>
                    <MinutePlot y={543} h={123} rows={[563.5, 614.5]}>
                        {volume.map((v, i) => v !== 0 && (
                            <rect key={i} x={minuteX(i + 1)} y={665 - Math.abs(v) / 3} width="1" height={Math.abs(v) / 3} fill={v > 0 ? UP : DOWN} />
                        ))}
                    </MinutePlot>
                </PlotCell>
                <AxisCell $right />
            </PaneGrid>
            <MinutePane y={687} h={103} rows={[688.5, 723.5, 758.5]} major={[723.5, 758.5]} from={758.5} step={7}
                labels={[['0.2', 695], ['0.1', 723], ['0.0', 758]]}
                head={<Head name="MACD" values={[['(20,10,7) ', GREY], ['DIF=0.01', WHITE], dn, [',DEA=0.013', YEL], dn, [',MACD=-0.006', PINK], dn]} />}>
                {macdBars.map((v, i) => v !== 0 && (
                    <rect key={i} x={minuteX(i + 1)} y={v > 0 ? 758 - v / 3 : 759} width="1" height={Math.abs(v) / 3} fill={v > 0 ? UP : DOWN} />
                ))}
                <Line pts={dif} c={WHITE} />
                <Line pts={dea} c={YEL} />
            </MinutePane>
            <MinutePane y={811} h={103} rows={[844.5, 879.5]} from={844.5} step={7}
                labels={[['10', 819], ['0', 844], ['-10', 879], ['-20', 907]]}
                head={<Head tools="short" name="主力筹码(分时）[自编]" values={[['分界线=0', WHITE], [',主力筹码=0', YEL]]} />}>
                <line x1="94" x2="1236" y1="844.5" y2="844.5" stroke={YEL} />
                <path d="M251 844l3-3h5l4 3M319 844l4-3 5 3" fill="none" stroke="#fff" />
                {[253, 258, 322].map(x => <rect key={x} x={x} y="811" width="3" height="103" fill="#ffff00" />)}
            </MinutePane>
            <MinutePane y={935} h={103} rows={[959.5, 998.5]} from={998.5} step={7.8}
                labels={[['100', 960], ['50', 998], ['0', 1031]]}
                head={<Head tools="short" name="抄底资金(分时）[自编]" values={[['抄底资金=110.018', '#ff0000'], up]} />}>
                {redBars.map(([x, t]) => <rect key={x} x={x - 1} y={t} width="3" height={1038 - t} fill="red" />)}
                <Line pts={bottomFund} c="red" />
            </MinutePane>
            <MinutePane y={1059} h={103} rows={[1111.5]} from={1111.5} step={5.5}
                labels={[['0', 1112]]}
                head={<Head name="分时力道" values={[['19.958', '#ffff00'], up]} />}>
                {forceAuto.map(([x, v]) => (
                    <rect key={x} x={x - 1} y={Math.min(v, 1111.5)} width="3" height={Math.abs(v - 1111.5)} fill={v < 1111.5 ? MAROON : FOREST} />
                ))}
                {forceBars.map(([u, t, c], i) => {
                    const v = 900 + t / 3;
                    return <rect key={i} x={Math.round(u * KX) - 1} y={Math.min(v, 1111.5)} width="3" height={Math.abs(v - 1111.5)} fill={c} />;
                })}
                <Line pts={force} c="#ffff20" />
            </MinutePane>
            <MinutePane y={1183} h={99} rows={[1221.5]} major={[1221.5, 1273.5]} from={1221.5} step={5.2}
                labels={[['500', 1222], ['0', 1274]]}
                head={<Head name="多空能量" values={[['多头量能=0', '#ffff00'], [',', YEL], ['主动买盘总量=20', '#840030'], up]} />}>
                {energyBars.map(([u, t, g], i) => {
                    const x = Math.round(u * KX);
                    const v = 900 + t / 3;
                    return (
                        <g key={i}>
                            <rect x={x} y={Math.min(v, 1273)} width="2" height={Math.abs(1273 - v)} fill="#2f7898" />
                            {g && <rect x={x} y={900 + g / 3} width="2" height={373 - g / 3} fill="#30a860" />}
                        </g>
                    );
                })}
                <Line pts={activeBuy} c="#840030" />
                <Line pts={bullEnergy} c="#ffff00" w={2} />
            </MinutePane>
            <TimeRow $right>
                <Unit>分时<DownArrow /></Unit>
                <Stamps>
                    <Stamp $first $w={181}>&nbsp;1/05</Stamp>
                    <Stamp $w={137}>10:00</Stamp>
                    <Stamp $w={138}>10:30</Stamp>
                    <Stamp $w={137}>11:00</Stamp>
                    <Stamp $w={138}>11:30</Stamp>
                    <Stamp $w={137}>13:30</Stamp>
                    <Stamp $w={138}>14:00</Stamp>
                    <Stamp $w={137}>14:30</Stamp>
                    <Stamp $w={4}>15:00</Stamp>
                    <CursorTag>14:42</CursorTag>
                </Stamps>
            </TimeRow>
        </Panel>
    );
}

function Candle({ i, d }) {
    const [kind, hi, t, b, lo] = d;
    const x = dayX(i);
    const line = kind === 'r' || kind === 'm' ? UP : CYAN;
    const fill = kind === 'r' || kind === 'h' ? 'none' : CYAN;
    const h = Math.max(1, Math.round((b - t) / 3) - 1);
    return (
        <g stroke={line}>
            <line x1={x + .5} x2={x + .5} y1={hi / 3} y2={t / 3} />
            <line x1={x + .5} x2={x + .5} y1={b / 3} y2={lo / 3} />
            <rect x={x - 2.5} y={Math.round(t / 3) + .5} width="6" height={h} fill={fill} />
        </g>
    );
}

function DayPanel() {
    const grid = [127.5, 172.5, 216.5, 261.5, 306.5, 351.5, 395.5, 440.5, 485.5, 530.5, 575.5, 619.5];
    return (
        <Panel>
            <PaneGrid>
                <AxisCell>
                    <Axis x={1293} y={76} h={587} top={97} from={127.5} step={4.47} major={grid}
                        labels={grid.map((g, i) => [String(35 - i), g + .5, i === 11 ? DOWN : UP])}>
                        <line x1="1293" x2="1355" y1="96.5" y2="96.5" stroke={RED} />
                    </Axis>
                </AxisCell>
                <PaneHead $main>
                    <Tint $c="#a8a8a8">药康生物   </Tint>
                    <HeadName>MA<Caret /></HeadName>
                    <Values list={[['(', GREY], ['5', WHITE], [',10', YEL], [',20', PINK], [',30', UP], [',60', CYAN], [',250', DOWN], [')  ', GREY], ['MA1=24.878', WHITE], up, [',MA2=24.539', YEL], up, [',MA3=24.616', PINK], up, [',MA4=25.44', UP], dn, [',MA5=28.598', CYAN], dn]} />
                    <HeadTools><button aria-label="帮助">?</button></HeadTools>
                </PaneHead>
                <PlotCell>
                    <DayPlot y={97} h={566} rows={grid}>
                        <line x1="1356" x2="2143" y1="579.5" y2="579.5" stroke={RED} strokeDasharray="3 1" />
                        {candles.map((d, i) => <Candle key={i} i={i} d={d} />)}
                        {maLines.map(([c, w, pts]) => <Line key={c} pts={pts} c={c} w={w} />)}
                        {[161, 428, 444, 585, 743, 758, 963, 1089, 1105, 1120].map(u => (
                            <path key={u} d={`M${Math.round(dx(u))} 95l4 5-4 5-4-5z`} fill={YEL} />
                        ))}
                        <path d={`M${Math.round(dx(680))} 652l4 5-4 5-4-5z`} fill={UP} />
                        {[[255, 965, 1018], [680, 823, 875], [757, 863, 916], [993, 663, 715]].map(([u, y, a]) => (
                            <g key={u}>
                                <MarkText x={dx(u)} y={y / 3}>S</MarkText>
                                <path d={`M${Math.round(dx(u))} ${a / 3 + 3}l-4-4h2v-3h4v3h2z`} fill={DOWN} />
                            </g>
                        ))}
                        {[[208, 1362, 1112], [428, 1645, 1595], [696, 1266, 1218], [790, 1107, 1057], [1466, 1855, 1805]].map(([u, y, a]) => (
                            <g key={u}>
                                <MarkText $buy x={dx(u)} y={y / 3}>B</MarkText>
                                <path d={`M${Math.round(dx(u))} ${a / 3 - 3}l4 4h-2v3h-4v-3h-2z`} fill={YEL} />
                            </g>
                        ))}
                        <path d="M1797.5 120V106.5H1817M2006.5 650V653.5H2026" fill="none" stroke={GREY} />
                        <AxisText x="1817" y="107" $c={GREY} $anchor="start">35.48</AxisText>
                        <AxisText x="2026" y="653" $c={GREY} $anchor="start">23.23</AxisText>
                        <DayCursor y={97} h={566} />
                        <line x1="2102.5" x2="2102.5" y1="490" y2="502" stroke="#008080" />
                    </DayPlot>
                </PlotCell>
            </PaneGrid>
            <DayPane y={684} h={112} rows={[709.5, 752.5]} from={709.5} step={4.3}
                labels={[['4000', 710], ['2000', 752]]}
                extra={<g><rect x="1324.5" y="781.5" width="21" height="14" fill="none" stroke={RED} /><AxisText x="1344" y="789" $c="#8c0000">x10</AxisText></g>}
                head={<Head name="VOL" values={[['(', GREY], ['5', YEL], [',10', PINK], [',20', UP], [') ', GREY], ['VOL=40874', WHITE], up, [',MA1=22783', YEL], up, [',MA2=18262', PINK], up, [',MA3=18655', UP], up]} />}>
                {dayVolume.map((v, i) => {
                    const h = Math.round(Math.abs(v) / 3);
                    return <rect key={i} x={dayX(i) - 2.5} y={795.5 - h} width="6" height={h - 1} fill={v < 0 ? CYAN : 'none'} stroke={v < 0 ? CYAN : UP} />;
                })}
                {volLines.map(([c, w, pts]) => <Line key={c} pts={pts} c={c} w={w} />)}
                <DayCursor y={684} h={112} />
            </DayPane>
            <DayPane y={817} h={185} rows={[856.5, 897.5, 938.5, 979.5]} from={856.5} step={4.1}
                labels={[['300', 825], ['200', 857], ['100', 898], ['0', 939], ['-100', 980]]}
                head={<Head tools="short" name="抄底资金（日线）[自编]" values={[['(', GREY], ['5,30', WHITE], [') ', GREY], ['分界线=0', WHITE], [',抄底资金=123.138', YEL], up, [',抄底信号=1', PINK], up, [',神龙摆尾=1', UP], up]} />}>
                <Line pts={dayFund} c={YEL} w={4} />
                <line x1="1360" x2="2103" y1="938.5" y2="938.5" stroke={UP} />
                <AxisText x={dx(1230)} y="878" $c="#ff00ff" $anchor="middle">神龙摆尾</AxisText>
                <AxisText x={dx(1482)} y="878" $c="#ff00ff" $anchor="middle">神龙摆尾</AxisText>
                <rect x="1960" y="817" width="5" height="130" fill="red" />
                <rect x="2100" y="817" width="5" height="130" fill="red" />
                <rect x="2101" y="817" width="3" height="130" fill="#009c9c" />
                <DayCursor y={817} h={185} />
            </DayPane>
            <DayPane y={1023} h={139} rows={[1035.5, 1092.5, 1150.5]} from={1035.5} step={11.5}
                labels={[['500', 1036], ['0', 1093], ['-500', 1150]]}
                head={<Head name="CMFX" values={[['锁定筹码=31.974', WHITE], up, [',浮动筹码=348.661', YEL], dn, [',力量对比=-316.687', PINK], up]} />}>
                <Line pts={floatChips} c={YEL} />
                <Line pts={lockedChips} c={WHITE} />
                <DayCursor y={1023} h={139} />
                {chipGap.map((b, i) => (
                    <rect key={i} x={dayX(i)} y="1093" width="1" height={b / 3 - 293} fill={i === 85 ? '#ff00a0' : DOWN} />
                ))}
            </DayPane>
            <DayPane y={1183} h={99} rows={[1241.5]} from={1241.5} step={6}
                labels={[['50', 1242]]}
                head={<Head boxed name="龙腾活跃[自编]" values={[['龙腾活跃=53.746', '#ffff00'], up, [',海面线=20', CYAN]]} />}>
                <Line pts={activity} c="#ffff00" w={2} />
                <line x1="1361" x2="2103" y1="1281" y2="1281" stroke={CYAN} strokeWidth="2" />
                <DayCursor y={1183} h={99} />
            </DayPane>
            <TimeRow>
                <Unit>日线<DownArrow /></Unit>
                <Stamps>
                    <Stamp $first $w={4} />
                    <Stamp $w={44}>2022/8</Stamp>
                    <Stamp $w={157}>9</Stamp>
                    <Stamp $w={139}>10</Stamp>
                    <Stamp $w={193}>11</Stamp>
                    <Stamp $w={192}>12</Stamp>
                    <Stamp $w={57}>2023/1</Stamp>
                </Stamps>
            </TimeRow>
        </Panel>
    );
}

/* ---------- quote column ---------- */

const QuoteSide = styled.aside`
    flex: 0 0 350px;
    margin-left: 6px;
    padding-top: 6px;
    overflow: hidden;
    font-size: 14px;
`;

const QuoteBox = styled.section`
    width: 378px;
    border: 1px solid ${RED};
    & + & { margin-top: 8px; border-bottom: 0; }
`;

const StockTitle = styled.div`
    position: relative;
    display: flex;
    align-items: center;
    justify-content: center;
    gap: 8px;
    height: 32px;
    font-size: 20px;
    padding-right: 18px;
    strong {
        color: ${CYAN};
        font: bold 18px "Liberation Sans", sans-serif;
        margin-bottom: 2px;
    }
    small {
        margin-left: -4px;
        color: ${UP};
        font: bold 12px/11px "Liberation Sans", sans-serif;
        width: 10px;
        word-break: break-all;
    }
`;

const Back = styled.button`
    position: absolute;
    left: 3px;
    top: 10px;
`;

const Table = styled.table`
    width: 100%;
    table-layout: fixed;
    border-collapse: separate;
    border-spacing: 0;
    border-top: 1px solid ${RED};
    tr { height: 22px; }
    tr:first-child { height: 21px; }
    td, th {
        padding: 0;
        font-weight: normal;
        line-height: 20px;
        text-align: left;
        white-space: nowrap;
    }
`;

const Num = styled.td`
    && {
        text-align: right;
        padding-right: ${p => p.$pad || 0}px;
    }
    font-family: "Liberation Serif", "Noto Sans CJK SC", serif;
    font-size: 14px;
    color: ${p => p.$c || YEL};
`;

const Label = styled.td`
    && { padding-left: ${p => p.$pad || 4}px; }
`;

const Lined = styled.tr`
    td { border-top: 1px solid ${RED}; }
`;

const SideHead = styled.th`
    && { text-align: center; border-right: 1px solid ${RED}; }
    span {
        display: block;
        line-height: ${p => p.$lh}px;
    }
`;

const Title = styled.h3`
    margin: 0;
    height: ${p => p.$tall ? 26 : 23}px;
    line-height: ${p => p.$tall ? 26 : 22}px;
    padding-right: ${p => p.$tall ? 10 : 22}px;
    text-align: center;
    font-size: ${p => p.$tall ? 14 : 12}px;
    font-weight: normal;
    color: ${p => p.$tall ? GREY : '#fff'};
    border-top: ${p => p.$tall ? '0' : `1px solid ${RED}`};
    border-bottom: ${p => p.$tall ? '0' : `1px solid ${RED}`};
    background: linear-gradient(#363636, #161616);
`;

const PieBox = styled.div`
    display: flex;
    flex-direction: column;
    height: 177px;
    padding-top: 14px;
    svg { align-self: center; }
    p { margin: auto 0 0 3px; line-height: 20px; }
`;

const Swatch = styled.i`
    display: inline-block;
    width: 14px;
    height: 14px;
    margin-right: 4px;
    vertical-align: -2px;
    background: ${p => p.$c};
`;

const Tabs = styled.div`
    display: flex;
    height: ${p => p.$h || 24}px;
    font-size: 12px;
    background: linear-gradient(#171722, #141a2a);
`;

const Tab = styled.button`
    padding: 0 6px;
    color: #d8d8d8;
    ${p => p.$on && css`
        padding: 0 5px;
        color: #402000;
        background: linear-gradient(#ffa030, #e08c10);
    `}
`;

const FinanceTabs = styled.div`
    display: grid;
    grid-template-columns: 1fr 1fr;
    height: 26px;
    border-top: 1px solid ${RED};
    font-size: 12px;
`;

const FinanceTab = styled.button`
    color: ${p => p.$on ? '#fff' : GREY};
    background: ${p => p.$on ? 'linear-gradient(#900000, #480000)' : '#222'};
    & + & { border-left: 1px solid ${RED}; }
`;

const Facts = styled.dl`
    margin: 0;
    font-family: "Noto Sans CJK SC", sans-serif;
    div {
        display: flex;
        justify-content: space-between;
        height: 26px;
        line-height: 26px;
        white-space: nowrap;
    }
    dt { padding-left: 1px; }
    dd { margin: 0; }
`;

const Fact = styled.dd`
    && {
        overflow: hidden;
        max-width: 203px;
        margin-right: ${p => p.$text ? 12 : 25}px;
    }
    color: ${p => p.$c};
    font-family: ${p => p.$num ? '"Liberation Serif", serif' : '"Noto Sans", "Noto Sans CJK SC", sans-serif'};
`;

const Tri = styled.i`
    display: inline-block;
    border: 4px solid transparent;
    border-top: 0;
    border-bottom: 7px solid ${UP};
    vertical-align: 1px;
`;

const stats = [
    ['最新', '26.61', UP, '均价', '26.15', UP],
    ['涨跌', <><Tri />1.71</>, UP, '开盘', '24.92', UP],
    ['涨幅', '+6.87%', UP, '最高', '26.83', UP],
    ['总手', '40874', CYAN, '最低', '24.88', DOWN],
    ['现手', <>356<Tri /></>, YEL, '量比', '1.97', DOWN],
    ['金额', '1.069亿', YEL, '强弱', <><Tri />6.81</>, YEL],
    ['换手', '8.82%', YEL, '5日', '24.58%', YEL],
    ['涨停', '29.88', UP, '跌停', '19.92', DOWN],
    ['笔数', '5963', CYAN, '均笔', '6.8', YEL],
    ['内盘', '15374', DOWN, '外盘', '25500', UP],
];

const orders = [
    { side: '委买单', total: '3177', avg: '12.9', rows: [['特大', '2844', '7%', '#ff5f5f'], ['大单', '11219', '27%', '#aa4040'], ['中单', '14602', '36%', '#803030'], ['小单', '12209', '30%', '#552020']] },
    { side: '委卖单', total: '3388', avg: '12.1', rows: [['特大', '0', '0%', '#00ffff'], ['大单', '9534', '23%', '#00aaaa'], ['中单', '16574', '41%', '#008080'], ['小单', '14766', '36%', '#005555']] },
];

const slices = [[3.5, '#ff5f5f'], [13.5, '#aa4040'], [18, '#803030'], [15, '#552020'], [18, '#005555'], [20.5, '#008080'], [11.5, '#00aaaa']];

function Pie() {
    let acc = 0;
    const at = (v) => {
        const a = v / 100 * Math.PI * 2;
        return `${(63 + 62 * Math.sin(a)).toFixed(2)} ${(63 - 62 * Math.cos(a)).toFixed(2)}`;
    };
    return (
        <svg width="126" height="126" viewBox="0 0 126 126">
            {slices.map(([v, c]) => {
                const from = at(acc);
                acc += v;
                return <path key={c} d={`M63 63L${from}A62 62 0 0 1 ${at(acc)}z`} fill={c} stroke="#a00000" />;
            })}
        </svg>
    );
}

function Quote() {
    const sell = [['5', '26.65', '36'], ['4', '26.64', '12'], ['3', '26.63', '118'], ['2', '26.62', '42'], ['1', '26.61', '38']];
    const buy = [['1', '26.57', '30'], ['2', '26.56', '38'], ['3', '26.55', '4'], ['4', '26.54', '22'], ['5', '26.53', '15']];
    return (
        <QuoteSide>
            <QuoteBox>
                <StockTitle>
                    <Back aria-label="返回">
                        <svg width="10" height="13" viewBox="0 0 10 13"><path d="M8 1L2.500 6.500 8 12" fill="none" stroke="#888" strokeWidth="3" /></svg>
                    </Back>
                    药康生物<strong>688046</strong><small>RK</small>
                </StockTitle>
                <Table>
                    <colgroup><col width="60" /><col width="124" /><col /></colgroup>
                    <tbody>
                        <tr><Label>委比</Label><Num $c={DOWN}>-51.95%</Num><Num $c={DOWN} $pad={4}>3284</Num></tr>
                    </tbody>
                </Table>
                {[['卖盘', sell], ['买盘', buy]].map(([side, rows]) => (
                    <Table key={side}>
                        <colgroup><col width="17" /><col width="31" /><col width="120" /><col width="133" /><col /></colgroup>
                        <tbody>
                            {rows.map(([n, p, v], i) => (
                                <tr key={n}>
                                    {i === 0 && <SideHead rowSpan={5} $lh={44}>{[...side].map(s => <span key={s}>{s}</span>)}</SideHead>}
                                    <Label $pad={2}>{n}</Label>
                                    <Num $c={UP}>{p}</Num>
                                    <Num>{v}</Num>
                                    <td />
                                </tr>
                            ))}
                        </tbody>
                    </Table>
                ))}
                <Table>
                    <colgroup><col width="60" /><col width="124" /><col width="69" /><col /></colgroup>
                    <tbody>
                        {stats.map(([a, av, ac, b, bv, bc], i) => {
                            const Row = i > 6 ? Lined : 'tr';
                            return (
                                <Row key={a}>
                                    <Label>{a}</Label><Num $c={ac}>{av}</Num>
                                    <Label $pad={9}>{b}</Label><Num $c={bc} $pad={4}>{bv}</Num>
                                </Row>
                            );
                        })}
                    </tbody>
                </Table>
                <Title>龙虎看盘(逐单量)</Title>
                <PieBox>
                    <Pie />
                    <p>已成交委托单统计</p>
                </PieBox>
                {orders.map(o => (
                    <Table key={o.side}>
                        <colgroup><col width="21" /><col width="70" /><col width="72" /><col width="85" /><col /></colgroup>
                        <tbody>
                            <tr>
                                <SideHead rowSpan={5} $lh={22}>{[...o.side].map(s => <span key={s}>{s}</span>)}</SideHead>
                                <Label colSpan={4} $pad={2}>
                                    共<Tint $c={CYAN}>{o.total}</Tint>单<Tint $c={YEL}>{o.avg}</Tint>手/单
                                </Label>
                            </tr>
                            {o.rows.map(([n, v, pct, c]) => (
                                <tr key={n}>
                                    <Label><Swatch $c={c} />{n}</Label>
                                    <Num>{v}</Num>
                                    <Num>{pct}</Num>
                                    <td />
                                </tr>
                            ))}
                        </tbody>
                    </Table>
                ))}
                <Tabs>
                    {['分笔', '短线', '分时', '资金', '财务', '龙虎'].map(t => <Tab key={t} $on={t === '龙虎'}>{t}</Tab>)}
                </Tabs>
            </QuoteBox>
            <QuoteBox>
                <Tabs $h={23}><Tab $on>财务</Tab></Tabs>
                <FinanceTabs>
                    <FinanceTab $on>财务分析</FinanceTab>
                    <FinanceTab>深度分析</FinanceTab>
                </FinanceTabs>
                <Facts>
                    <div><dt>所属行业</dt><Fact $text $c={YEL}>生物制品</Fact></div>
                    <div><dt>所属概念</dt><Fact $text $c={YEL}>次新股,基金重仓,融资融券,中盘</Fact></div>
                </Facts>
                <Title $tall>主要指标</Title>
                <Facts>
                    <div><dt>财报披露</dt><Fact $c={GREY}>2023-04-20</Fact></div>
                    <div><dt>市盈率(TTM)</dt><Fact $num $c={UP}>65.1</Fact></div>
                    <div><dt>扣非市盈率(TTM)</dt><Fact $num $c={UP}>70.5</Fact></div>
                    <div><dt>市净率</dt><Fact $num $c={UP}>5.62</Fact></div>
                    <div><dt>有效流通市值</dt><Fact $num $c={YEL}>12.33</Fact></div>
                    <div><dt>流通A市值</dt><Fact $num $c={YEL}>12.33</Fact></div>
                    <div><dt>总市值</dt><Fact $num $c={YEL}>109.1</Fact></div>
                </Facts>
            </QuoteBox>
        </QuoteSide>
    );
}

function App() {
    return (
        <Page>
            <GlobalStyle />
            <MenuBar>
                <MenuList>
                    <Logo />
                    {['预测', '机构', '核心功能', '特色功能', '市场监测', '选股', '行情', '数据', '资讯', '策略中心', '设置'].map(t => (
                        <MenuItem key={t} $on={t === '策略中心'}>{t}</MenuItem>
                    ))}
                </MenuList>
                <AppTitle><span>益盟操盘手</span><span>金融平台</span><span>资金密道</span></AppTitle>
            </MenuBar>
            <StrategyBar>
                {['我的策略', '形态异动', '热点题材', '资金密码', '专家策略', '超级策略', '机构策略', '策略共振'].map(t => (
                    <StrategyButton key={t}>{t}</StrategyButton>
                ))}
                <TradeArea>
                    <TradeButton>交 易</TradeButton>
                    <TradeButton>低佣开户</TradeButton>
                    <MoreLink href="#more">微播</MoreLink>
                </TradeArea>
            </StrategyBar>
            <Body>
                <SideRail>
                    <RailTab><span>股市全景</span></RailTab>
                    <RailTab><CloseIcon /><span>个股分析</span></RailTab>
                    <RailTab $on><CloseIcon /><span>个股全景</span></RailTab>
                </SideRail>
                <Charts>
                    <Toolbar>
                        {['F10', '诊股', '机构', '识别', '四度', '全景', '三分钟', '冲击波'].map(t => (
                            <Tool key={t} $on={t === '全景'}>{t}</Tool>
                        ))}
                        <Periods>
                            <Period>分时</Period>
                            <Period>日线</Period>
                            <Period>60分</Period>
                            <Period>30分</Period>
                            <Period>周线<Caret /></Period>
                        </Periods>
                        <ToolsRight>
                            <Tool>返回个股分析</Tool>
                            <Tool>平移</Tool>
                            <WatchList>━自选<Caret /></WatchList>
                            <button aria-label="收起">
                                <svg width="14" height="12" viewBox="0 0 14 12"><path d="M1 1l5 5-5 5M11 0v12" fill="none" stroke="#ddd" strokeWidth="2" /></svg>
                            </button>
                        </ToolsRight>
                    </Toolbar>
                    <Panels>
                        <MinutePanel />
                        <DayPanel />
                    </Panels>
                </Charts>
                <Quote />
            </Body>
            <Watermark><span>股吧</span>www.gu8.cn</Watermark>
        </Page>
    );
}

export default App
